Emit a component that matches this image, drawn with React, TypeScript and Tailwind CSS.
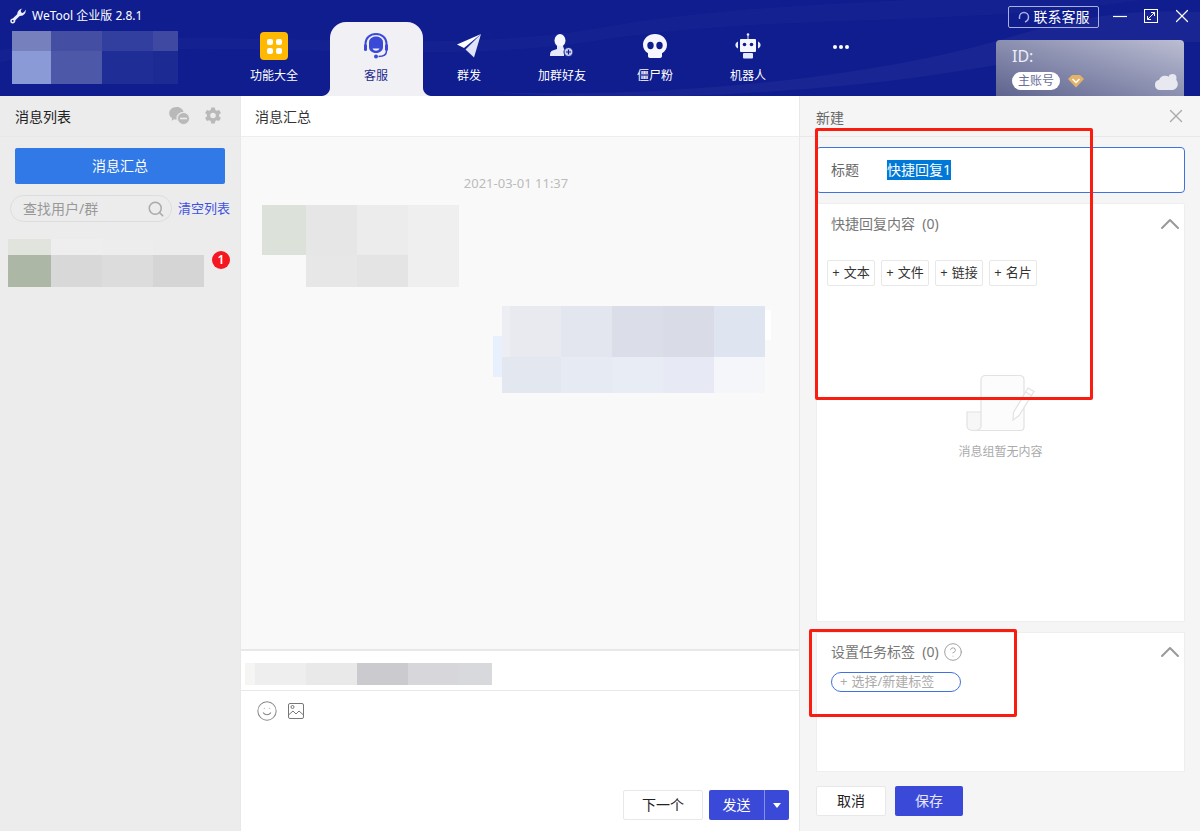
import { ChevronUp, CircleHelp, Search, Smile, X } from "lucide-react";

type Cell = [number, number, number, number, string];

// the blurred-out avatars and names are a picture: rows of flat colour blocks
function Mosaic({ width, height, cells }: { width: number; height: number; cells: Cell[] }) {
  return (
    <svg width={width} height={height} className="block shrink-0" shapeRendering="crispEdges">
      {cells.map(([x, y, w, h, fill]) => (
        <rect key={`${x}-${y}`} x={x} y={y} width={w} height={h} fill={fill} />
      ))}
    </svg>
  );
}

const profileCells: Cell[] = [
  [0, 0, 39, 20, "#7580bd"],
  [39, 0, 51, 20, "#444fa3"],
  [90, 0, 51, 20, "#333f9f"],
  [141, 0, 25, 20, "#3f49a2"],
  [0, 20, 39, 33, "#8a9ad6"],
  [39, 20, 51, 33, "#4d58a8"],
  [90, 20, 51, 33, "#1f2d96"],
  [141, 20, 25, 33, "#1c2a94"],
];

const listCells: Cell[] = [
  [0, 0, 43, 16, "#e0e4dc"],
  [43, 0, 51, 16, "#eeeeee"],
  [94, 0, 51, 16, "#ededed"],
  [0, 16, 43, 32, "#adb7a6"],
  [43, 16, 51, 32, "#d8d8d8"],
  [94, 16, 51, 32, "#dcdcdd"],
  [145, 16, 51, 32, "#d5d5d6"],
];

const leftBubbleCells: Cell[] = [
  [0, 0, 44, 50, "#dce1da"],
  [44, 0, 51, 50, "#e6e6e6"],
  [95, 0, 51, 50, "#ececec"],
  [146, 0, 51, 50, "#efefef"],
  [44, 50, 51, 32, "#e7e7e8"],
  [95, 50, 51, 32, "#e4e4e4"],
  [146, 50, 51, 32, "#efefef"],
];

const rightBubbleCells: Cell[] = [
  [0, 30, 10, 41, "#e8f0fd"],
  [272, 4, 6, 30, "#ffffff"],
  [9, 0, 8, 51, "#edeef3"],
  [17, 0, 51, 51, "#e9eaef"],
  [68, 0, 51, 51, "#e3e6ef"],
  [119, 0, 51, 51, "#dbdee8"],
  [170, 0, 51, 51, "#d9dce6"],
  [221, 0, 51, 51, "#dfe4f1"],
  [9, 51, 59, 36, "#e3e7ef"],
  [68, 51, 51, 36, "#e6eaf3"],
  [119, 51, 51, 36, "#e8ecf5"],
  [170, 51, 51, 36, "#e7eaf4"],
  [221, 51, 51, 36, "#f5f6fa"],
];

const quoteCells: Cell[] = [
  [0, 0, 10, 22, "#f5f5f3"],
  [10, 0, 51, 22, "#eeeeee"],
  [61, 0, 51, 22, "#e9e9e9"],
  [112, 0, 51, 22, "#cbcbcf"],
  [163, 0, 51, 22, "#d7d7db"],
  [214, 0, 33, 22, "#d8d9dc"],
];

function WrenchIcon() {
  return (
    <svg width="16" height="16" viewBox="0 0 16 16" className="shrink-0" fill="#eef0fb">
      <path d="M15.6 1.6c.5 2.6-.6 5-2.9 5.8-1.2.4-2.3.3-3.3.9L5.3 12.2c.3 1.5-.6 3-2.2 3.3C1.500 15.800.2 14.700.2 13.100c0-1.400 1.100-2.500 2.500-2.600l4.500-4.300c.2-1.700.6-3.200 2-4.300 1-.8 2.200-1.200 3.200-1.300-.8.600-1.500 1.300-1.600 2.300-.1 1.100.7 2 1.700 2 1.300 0 2.500-1.500 3.100-3.300z" />
      <circle cx="2.700" cy="13" r="1" fill="#0f1d8f" />
    </svg>
  );
}

function GridIcon() {
  return (
    <span className="flex size-7 items-center justify-center rounded-sm bg-amber-400">
      <span className="grid grid-cols-2 gap-0.75">
        <span className="size-1.5 rounded-xs bg-white" />
        <span className="size-1.5 rounded-xs bg-white" />
        <span className="size-1.5 rounded-xs bg-white" />
        <span className="size-1.5 rounded-xs bg-white" />
      </span>
    </span>
  );
}

function HeadsetIcon() {
  return (
    <svg width="26" height="26" viewBox="0 0 26 26">
      <path d="M2.500 13V10.500C2.500 5 7 1 13 1s10.500 4 10.500 9.500V13" fill="none" stroke="#3a49d8" strokeWidth="2" />
      <path d="M6 9.500C6 6 9 3.500 13 3.500S20 6 20 9.500V14c0 3.500-3 6-7 6s-7-2.500-7-6z" fill="#3a49d8" />
      <path d="M9.500 15.500h7c-.8 1.500-2 2.200-3.500 2.200s-2.700-.7-3.500-2.200z" fill="#f0f0f5" />
      <rect x="1" y="11" width="3" height="7" rx="1.500" fill="#3a49d8" />
      <rect x="22" y="11" width="3" height="7" rx="1.500" fill="#3a49d8" />
      <path d="M23.500 18c0 3.500-3 5.500-8 5.500" fill="none" stroke="#3a49d8" strokeWidth="1.500" />
      <circle cx="13" cy="23.500" r="2" fill="#3a49d8" />
    </svg>
  );
}

function PlaneIcon() {
  return (
    <svg width="26" height="26" viewBox="0 0 26 26">
      <path d="M25 1 1 11.500l7 3.500z" fill="#ffffff" />
      <path d="M25 1 9.500 16.500 18 24.500z" fill="#dfe4fa" />
    </svg>
  );
}

function UserPlusIcon() {
  return (
    <svg width="26" height="26" viewBox="0 0 26 26">
      <ellipse cx="11" cy="7.500" rx="5.500" ry="6.500" fill="#f5f6fe" />
      <path d="M8 13h6l1 3 3 1c-2 1-3 3-3 6H1c0-3 .5-4.500 2-5.200L8 16z" fill="#e6e9fb" />
      <circle cx="19.500" cy="19" r="4.500" fill="#c9cff0" stroke="#0f1d8f" />
      <path d="M17 19h5M19.500 16.500v5" stroke="#0f1d8f" strokeWidth="1.200" />
    </svg>
  );
}

function SkullIcon() {
  return (
    <svg width="24" height="24" viewBox="0 0 24 24">
      <path d="M12 0c6.600 0 12 4.700 12 10.800 0 3.700-2 6.700-5 8.400V22c0 1-.8 2-2 2H7c-1.200 0-2-1-2-2v-2.800c-3-1.700-5-4.700-5-8.400C0 4.700 5.400 0 12 0z" fill="#f6f7fe" />
      <ellipse cx="7.500" cy="11.500" rx="3.200" ry="3.700" fill="#0f1d8f" />
      <ellipse cx="16.500" cy="11.500" rx="3.200" ry="3.700" fill="#0f1d8f" />
    </svg>
  );
}

function RobotIcon() {
  return (
    <svg width="26" height="26" viewBox="0 0 26 26">
      <circle cx="13" cy="1.500" r="1.300" fill="#e6e9fb" />
      <rect x="12.500" y="2" width="1" height="4" fill="#e6e9fb" />
      <rect x="5" y="6" width="16" height="13" rx="1" fill="#f6f7fe" />
      <circle cx="9.500" cy="11.500" r="1.800" fill="#0f1d8f" />
      <circle cx="16.500" cy="11.500" r="1.800" fill="#0f1d8f" />
      <rect x="8" y="20" width="10" height="5.500" rx="1" fill="#e6e9fb" />
      <path d="M3 8.500v7C1.200 14.800.4 13.500.4 12S1.200 9.200 3 8.500zM23 8.500v7c1.800-.7 2.600-2 2.600-3.500S24.800 9.200 23 8.500z" fill="#e6e9fb" />
    </svg>
  );
}

function Dots() {
  return (
    <span className="mt-0.5 flex h-7 items-center gap-0.5">
      <span className="size-1 rounded-full bg-white" />
      <span className="size-1 rounded-full bg-white" />
      <span className="size-1 rounded-full bg-white" />
    </span>
  );
}

function WechatMinusIcon() {
  return (
    <svg width="21" height="20" viewBox="0 0 21 20">
      <path d="M7.500 1C3.400 1 .2 3.800.2 7.300c0 2.100 1.200 3.900 3 5l-.7 2.400 2.700-1.400c.7.200 1.500.3 2.300.3h.3c-.2-.6-.3-1.200-.3-1.800 0-3.300 3-5.800 6.700-5.800h.4C13.900 3 11 1 7.500 1z" fill="#b9b9b9" />
      <path d="M14 7c-3.200 0-5.800 2.200-5.800 5s2.600 5 5.800 5c.7 0 1.300-.1 1.900-.3l2.100 1.100-.5-1.900c1.400-.9 2.300-2.300 2.300-3.900 0-2.800-2.600-5-5.800-5z" fill="#b9b9b9" />
      <circle cx="14.500" cy="12.500" r="6" fill="#b9b9b9" stroke="#ececec" />
      <rect x="11" y="11.700" width="7" height="1.600" fill="#ececec" />
    </svg>
  );
}

function GearIcon() {
  return (
    <svg width="18" height="18" viewBox="0 0 18 18">
      <path
        fillRule="evenodd"
        d="M7.200.5h3.600l.5 2.400 1.500.8 2.300-.8 1.800 3.100-1.800 1.600v1.800l1.800 1.600-1.800 3.100-2.300-.8-1.500.8-.5 2.400H7.200l-.5-2.400-1.500-.8-2.300.8L1.100 11l1.800-1.600V7.600L1.100 6l1.800-3.100 2.300.8 1.500-.8zM9 5.700a2.800 2.800 0 1 0 0 5.600 2.800 2.800 0 0 0 0-5.600z"
        fill="#b9b9b9"
      />
    </svg>
  );
}

function ImageIcon() {
  return (
    <svg width="16" height="16" viewBox="0 0 16 16" fill="none" stroke="#777777">
      <rect x=".5" y=".5" width="15" height="15" rx="1.500" />
      <circle cx="4.500" cy="4" r="1.500" />
      <path d="M.5 12 5 8l3 3 3-3 4.500 4" />
    </svg>
  );
}

function EmptyDocIcon() {
  return (
    <svg width="70" height="60" viewBox="0 0 70 60" fill="none" stroke="#e2e2e2" strokeWidth="1.200">
      <path d="M15 38V6c0-3 2-4.500 4.500-4.500h34c3 0 4.500 2 4.500 4.500v47c0 2-1.500 3.500-3.500 3.500H8" fill="#fcfcfc" />
      <path d="M1 38h14v14c0 3-2 4.500-7 4.500S1 55 1 52z" fill="#f7f7f7" />
      <path d="M62 14l6 3.500-15 24-6 4.500 .5-7.500zM59.500 18l6 3.500" fill="#ffffff" />
    </svg>
  );
}

function Wave() {
  return (
    <svg className="absolute inset-0 size-full" viewBox="0 0 1200 96" preserveAspectRatio="none" fill="none">
      <path d="M0 50C200 20 420 60 600 28 800-8 1000 10 1200-30V-10C1000 30 800 10 600 40 420 70 200 30 0 62z" fill="#ffffff" opacity=".025" />
      <path d="M480 92C700 100 900 70 1000 40S1150 10 1200 12v30C1100 40 1000 70 860 84S620 100 480 92z" fill="#ffffff" opacity=".04" />
    </svg>
  );
}

const tabs = [
  { label: "客服", icon: <HeadsetIcon />, active: true },
  { label: "群发", icon: <PlaneIcon /> },
  { label: "加群好友", icon: <UserPlusIcon /> },
  { label: "僵尸粉", icon: <SkullIcon /> },
  { label: "机器人", icon: <RobotIcon /> },
  { label: "", icon: <Dots /> },
];

function Header() {
  return (
    <header className="relative flex h-24 shrink-0 overflow-hidden bg-[#0f1d8f] text-white">
      <Wave />
      <div className="relative w-[218px] shrink-0">
        <div className="flex h-7.75 items-center gap-1.5 pl-2.5 text-xs">
          <WrenchIcon />
          <span>WeTool 企业版 2.8.1</span>
        </div>
        <div className="pl-3">
          <Mosaic width={166} height={53} cells={profileCells} />
        </div>
      </div>

      <div className="relative flex w-28 shrink-0 flex-col items-center pt-8 text-xs">
        <GridIcon />
        <span className="mt-2">功能大全</span>
      </div>

      <nav className="relative grid w-[558px] shrink-0 grid-cols-6 text-xs">
        {tabs.map((tab) => (
          <div
            key={tab.label || "more"}
            className={`relative mt-5.5 flex flex-col items-center rounded-t-2xl pr-px pt-2.5 ${
              tab.active ? "bg-[#f0f0f5] text-[#1f2a8c]" : ""
            }`}
          >
            <span className="flex h-7 items-center">{tab.icon}</span>
            {tab.label && <span className="mt-2">{tab.label}</span>}
            {tab.active && (
              <>
                <svg width="8" height="8" viewBox="0 0 8 8" className="absolute -left-2 bottom-0">
                  <path d="M8 0v8H0c4 0 8-4 8-8z" fill="#f0f0f5" />
                </svg>
                <svg width="8" height="8" viewBox="0 0 8 8" className="absolute -right-2 bottom-0">
                  <path d="M0 0v8h8C4 8 0 4 0 0z" fill="#f0f0f5" />
                </svg>
              </>
            )}
          </div>
        ))}
      </nav>

      <div className="relative ml-auto mr-4 flex w-[188px] flex-col">
        <div className="-mr-2.25 flex h-10 items-start justify-end gap-3.5 pt-1.5">
          <button className="flex h-5.5 w-[91px] shrink-0 items-center justify-center gap-1 rounded-xs border border-[#aab0dc] text-sm">
            <svg width="12" height="12" viewBox="0 0 12 12" fill="none" stroke="#aab0dc" strokeWidth="1.500">
              <path d="M1.500 8V6a4.500 4.500 0 0 1 9 0c0 2.500-1 4-3.500 5" />
            </svg>
            联系客服
          </button>
          <svg width="14" height="22" viewBox="0 0 14 22" className="shrink-0" stroke="#ffffff" strokeWidth="1.200">
            <path d="M0 10.500h14" />
          </svg>
          <svg width="14" height="22" viewBox="0 0 14 22" className="ml-0.75 shrink-0" fill="none" stroke="#ffffff">
            <rect x=".5" y="3.500" width="13" height="13" />
            <path d="M3.500 13.500l7-7M7 6.500h3.500V10M3.500 10v3.500H7" />
          </svg>
          <X className="-ml-px -mt-px size-5.5 shrink-0 text-white" strokeWidth={1.3} />
        </div>
        <div className="relative flex-1 overflow-hidden rounded-t-sm bg-gradient-to-bl from-[#bcbed2] to-[#5f648f] px-4 pt-1.5">
          <div className="text-base leading-5 text-[#eceef8]">ID:</div>
          <div className="mt-1.5 flex items-center gap-2">
            <span className="flex h-4.5 w-12 items-center justify-center rounded-full bg-white text-xs text-[#6a6f99]">主账号</span>
            <svg width="16" height="14" viewBox="0 0 16 14">
              <path d="M4 1h8l4 4-8 8.500L0 5z" fill="#e3b36a" />
              <path d="M4.500 5 8 8.500 11.500 5" fill="none" stroke="#ffffff" strokeWidth="1.500" />
            </svg>
          </div>
          <svg width="24" height="17" viewBox="0 0 24 17" className="absolute bottom-1.5 right-1.5">
            <path d="M6 17a5 5 0 0 1-1-9.900A6.500 6.500 0 0 1 16 4.800a5 5 0 0 1 3 12.200z" fill="#e7e8f0" />
            <circle cx="18.500" cy="5" r="4" fill="#e7e8f0" />
          </svg>
        </div>
      </div>
    </header>
  );
}

function Sidebar() {
  return (
    <aside className="flex w-60 shrink-0 flex-col bg-[#ececec]">
      <div className="flex h-10.25 items-center justify-between border-b border-[#e8e8e8] pl-3.75 pr-4.5 text-sm text-[#222222]">
        <span className="pt-0.5">消息列表</span>
        <span className="flex items-center gap-3.5">
          <WechatMinusIcon />
          <GearIcon />
        </span>
      </div>
      <div className="px-3.75 pt-2.75">
        <button className="h-9 w-full rounded-xs bg-[#3079e6] text-sm text-white">消息汇总</button>
      </div>
      <div className="mt-2.75 flex items-center gap-1.5 pl-2.5">
        <div className="flex h-6.75 w-40.5 items-center justify-between rounded-full border border-[#dddddd] pl-3 pr-1.5 text-sm text-[#999999]">
          <span>查找用户/群</span>
          <Search className="size-4.5 text-[#aaaaaa]" />
        </div>
        <span className="text-[13px] text-[#3f51e0]">清空列表</span>
      </div>
      <div className="mt-4.25 flex pl-2">
        <Mosaic width={196} height={48} cells={listCells} />
        <span className="ml-2 mt-3 flex size-4.5 items-center justify-center rounded-full bg-[#f5161f] text-xs font-semibold text-white">1</span>
      </div>
    </aside>
  );
}

function Chat() {
  return (
    <main className="flex min-w-0 flex-1 flex-col border-x border-[#e8e8e8] bg-white">
      <div className="flex h-10.25 items-center border-b border-[#eeeeee] pl-3.5 pt-0.5 text-sm text-[#333333]">消息汇总</div>
      <div className="flex flex-1 flex-col bg-[#f9f9f9] pl-5 pr-7">
        <div className="mt-9 text-center text-[13px] leading-5 text-[#bbbbbb]">2021-03-01 11:37</div>
        <div className="ml-px mt-3">
          <Mosaic width={197} height={82} cells={leftBubbleCells} />
        </div>
        <div className="mt-4.75 self-end">
          <Mosaic width={278} height={87} cells={rightBubbleCells} />
        </div>
      </div>
      <div className="flex h-10.5 items-start border-y border-t-2 border-[#e8e8e8] pl-1 pt-3">
        <Mosaic width={247} height={22} cells={quoteCells} />
      </div>
      <div className="flex h-35 flex-col justify-between pb-2.75">
        <div className="flex items-center gap-2.5 pl-3.75 pt-2.25">
          <Smile className="size-5.5 text-[#888888]" strokeWidth={1.1} />
          <ImageIcon />
        </div>
        <div className="flex justify-end gap-1.5 pr-2.5">
          <button className="h-7.5 w-20 rounded-xs border border-[#e8e8e8] bg-white text-sm text-[#222222]">下一个</button>
          <div className="flex h-7.5 w-20 rounded-xs bg-[#3a49d8] text-sm text-white">
            <span className="flex flex-1 items-center justify-center border-r border-[#8790e6]">发送</span>
            <span className="flex w-6 items-center justify-center">
              <svg width="8" height="5" viewBox="0 0 8 5">
                <path d="M0 0h8L4 5z" fill="#ffffff" />
              </svg>
            </span>
          </div>
        </div>
      </div>
    </main>
  );
}

function AddButton({ label }: { label: string }) {
  return (
    <button className="flex h-6.5 w-12 items-center justify-center gap-1 rounded-xs border border-[#e8e8e8] bg-white text-[13px] text-[#333333]">
      <span>+</span>
      <span>{label}</span>
    </button>
  );
}

function EditPanel() {
  return (
    <section className="flex w-100 shrink-0 flex-col bg-[#f5f5f5]">
      <div className="flex h-10.25 items-center justify-between border-b border-[#e8e8e8] pl-4 pr-3.25 text-sm text-[#666666]">
        <span className="pt-1">新建</span>
        <X className="size-5.5 text-[#aaaaaa]" strokeWidth={1.5} />
      </div>
      <div className="flex flex-1 flex-col pb-3.75 pl-4 pr-3.75 pt-2.5">
        <div className="flex h-11.5 shrink-0 items-center rounded-sm border border-[#3f72e0] bg-white pl-3.5 text-sm text-[#666666]">
          <span className="w-14">标题</span>
          <span className="bg-[#0078d7] text-white">快捷回复1</span>
        </div>

        <div className="mt-2.5 flex h-104.75 shrink-0 flex-col rounded-xs border border-[#eeeeee] bg-white">
          <div className="flex items-center justify-between pl-3.5 pt-1 text-sm text-[#777777]">
            <span>快捷回复内容&nbsp;&nbsp;(0)</span>
            <ChevronUp className="-mr-0.5 size-8 text-[#999999]" strokeWidth={1.5} />
          </div>
          <div className="mt-5 flex gap-1.5 pl-2.5">
            <AddButton label="文本" />
            <AddButton label="文件" />
            <AddButton label="链接" />
            <AddButton label="名片" />
          </div>
          <div className="mt-22 flex flex-col items-center">
            <EmptyDocIcon />
            <span className="mt-2.5 text-xs text-[#aaaaaa]">消息组暂无内容</span>
          </div>
        </div>

        <div className="mt-2.5 flex-1 border border-[#eeeeee] bg-white pl-3.5 pt-0.75">
          <div className="flex items-center justify-between text-sm text-[#777777]">
            <span className="flex items-center gap-1">
              设置任务标签&nbsp;&nbsp;(0)
              <CircleHelp className="size-5 text-[#999999]" strokeWidth={1.1} />
            </span>
            <ChevronUp className="-mr-0.5 size-8 text-[#999999]" strokeWidth={1.5} />
          </div>
          <div className="mt-1 flex h-5 w-32.5 items-center gap-1 rounded-full border border-[#3f72e0] pl-2 text-[13px] text-[#aaaaaa]">
            <span>+</span>
            <span>选择/新建标签</span>
          </div>
        </div>

        <div className="mt-3.5 flex shrink-0 gap-2.25">
          <button className="h-7.5 w-17.5 rounded-xs border border-[#e8e8e8] bg-white text-sm text-[#222222]">取消</button>
          <button className="h-7.5 w-17 rounded-xs bg-[#3a49d8] text-sm text-[#e6e8fa]">保存</button>
        </div>
      </div>
    </section>
  );
}

export default function App() {
  return (
    <div
      className="relative flex h-screen flex-col overflow-hidden"
      style={{ fontFamily: '"Noto Sans", "Noto Sans CJK SC", sans-serif' }}
    >
      <Header />
      <div className="flex min-h-0 flex-1">
        <Sidebar />
        <Chat />
        <EditPanel />
      </div>
      {/* red annotation frames drawn over the screenshot */}
      <div className="absolute left-203.75 top-32 h-68 w-69.5 rounded-xs border-3 border-[#fb1c10]" />
      <div className="absolute left-202.25 top-157.25 h-22 w-52 rounded-xs border-3 border-[#fb1c10]" />
    </div>
  );
}
